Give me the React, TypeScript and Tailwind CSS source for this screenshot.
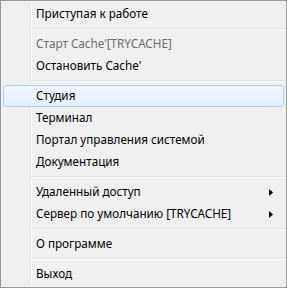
type Entry =
  | { kind: "item"; label: string; disabled?: boolean; active?: boolean; submenu?: boolean }
  | { kind: "sep" };

const ENTRIES: Entry[] = [
  { kind: "item", label: "Приступая к работе" },
  { kind: "sep" },
  { kind: "item", label: "Старт Cache'[TRYCACHE]", disabled: true },
  { kind: "item", label: "Остановить Cache'" },
  { kind: "sep" },
  { kind: "item", label: "Студия", active: true },
  { kind: "item", label: "Терминал" },
  { kind: "item", label: "Портал управления системой" },
  { kind: "item", label: "Документация" },
  { kind: "sep" },
  { kind: "item", label: "Удаленный доступ", submenu: true },
  { kind: "item", label: "Сервер по умолчанию [TRYCACHE]", submenu: true },
  { kind: "sep" },
  { kind: "item", label: "О программе" },
  { kind: "sep" },
  { kind: "item", label: "Выход" },
];

function MenuItem({ entry }: { entry: Extract<Entry, { kind: "item" }> }) {
  return (
    <div
      className={`h-[22px] flex items-center pl-[32px] pr-[9px] rounded-[3px] border ${
        entry.active
          ? "border-[#aecff7] bg-[linear-gradient(to_bottom,#f2f7fe,#e5effc)]"
          : "border-transparent"
      }`}
    >
      <span
        className={`flex-1 text-[11.7px] leading-none ${
          entry.disabled ? "text-[#6d6d6d]" : "text-black"
        }`}
      >
        {entry.label}
      </span>
      {/* Submenu arrow */}
      {entry.submenu && (
        <svg viewBox="0 0 4 7" className="w-[4px] h-[7px] mr-[1px]" fill="#000">
          <path d="M0 0L4 3.5L0 7z" />
        </svg>
      )}
    </div>
  );
}

export default function App() {
  return (
    <div
      className="w-[287px] h-[288px] border border-[#979797] bg-[#f0f0f0] p-[2px]"
      style={{ fontFamily: '"Noto Sans", "Open Sans", sans-serif' }}
    >
      {/* Icon gutter line */}
      <div className="h-full bg-[linear-gradient(to_right,transparent_27px,#e2e3e3_27px,#e2e3e3_28px,#ffffff_28px,#ffffff_29px,transparent_29px)]">
        {ENTRIES.map((entry, i) =>
          entry.kind === "sep" ? (
            <div key={i} className="h-[8px] flex flex-col pt-[3px] pl-[28px]">
              <div className="h-px bg-[#e0e0e0]" />
              <div className="h-px bg-white" />
            </div>
          ) : (
            <MenuItem key={i} entry={entry} />
          ),
        )}
      </div>
    </div>
  );
}
